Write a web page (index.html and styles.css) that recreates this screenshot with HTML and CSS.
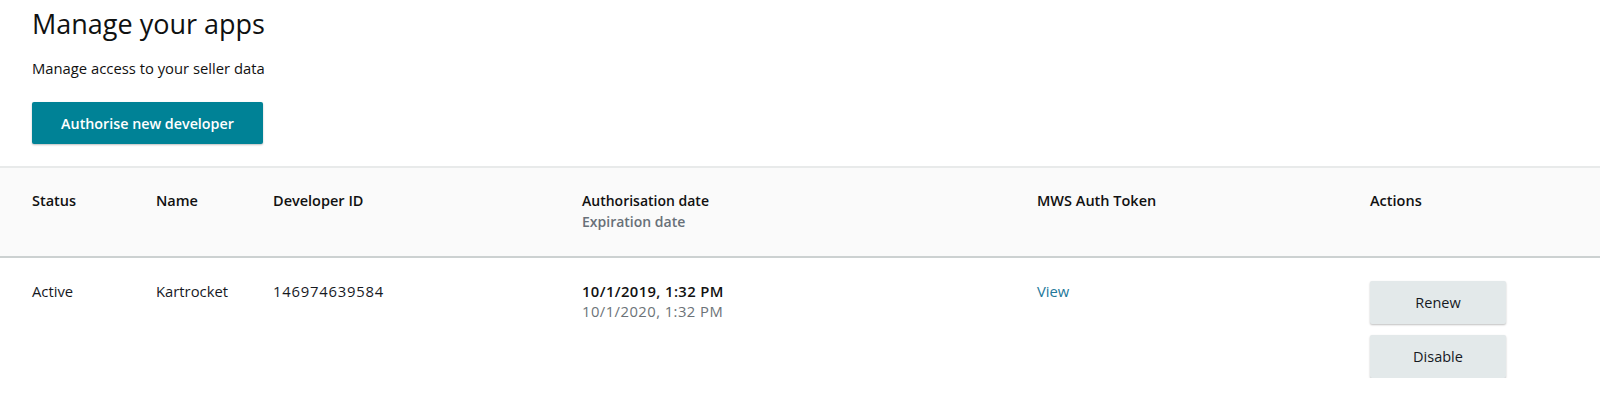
FILE: index.html
```html
<!DOCTYPE html>
<html lang="en">
<head>
<meta charset="utf-8">
<title>Manage your apps</title>
<link rel="stylesheet" href="styles.css">
</head>
<body>
<div class="page">
  <header class="intro">
    <h1 class="title">Manage your apps</h1>
    <p class="subtitle">Manage access to your seller data</p>
    <button class="btn-primary" type="button">Authorise new developer</button>
  </header>

  <div class="table">
    <div class="row head">
      <div class="cell">Status</div>
      <div class="cell">Name</div>
      <div class="cell">Developer ID</div>
      <div class="cell"><div class="head-main">Authorisation date</div><div class="muted">Expiration date</div></div>
      <div class="cell">MWS Auth Token</div>
      <div class="cell">Actions</div>
    </div>
    <div class="row body">
      <div class="cell">Active</div>
      <div class="cell">Kartrocket</div>
      <div class="cell num">146974639584</div>
      <div class="cell"><div class="strong">10/1/2019, 1:32 PM</div><div class="muted-light">10/1/2020, 1:32 PM</div></div>
      <div class="cell"><a class="link" href="#">View</a></div>
      <div class="cell actions">
        <button class="btn-secondary" type="button">Renew</button>
        <button class="btn-secondary" type="button">Disable</button>
      </div>
    </div>
  </div>
</div>
</body>
</html>
```

FILE: styles.css
```css
html, body {
  margin: 0;
  padding: 0;
  background: #ffffff;
}
body {
  font-family: "Open Sans", "Noto Sans", Arial, sans-serif;
  color: #111111;
  font-size: 14px;
}
.intro {
  padding: 6px 32px 0 32px;
  height: 166px;
  box-sizing: border-box;
}
.title {
  margin: 0;
  font-size: 27px;
  line-height: 36px;
  font-weight: 400;
  color: #0f1111;
}
.subtitle {
  margin: 16px 0 0 0;
  font-size: 14.8px;
  line-height: 20px;
  color: #111111;
}
.btn-primary {
  margin-top: 24px;
  width: 231px;
  height: 42px;
  border: 0;
  border-radius: 2px;
  background: #008296;
  color: #ffffff;
  font-family: inherit;
  font-size: 14.3px;
  font-weight: 600;
  box-shadow: 0 1px 2px rgba(0, 0, 0, 0.25);
  cursor: pointer;
}
.table {
  width: 100%;
}
.row {
  display: grid;
  grid-template-columns: 124px 117px 309px 455px 333px 1fr;
  padding-left: 32px;
  box-sizing: border-box;
}
.head {
  background: #fafafa;
  border-top: 2px solid #e8eaea;
  border-bottom: 2px solid #ccd1d1;
  height: 92px;
  padding-top: 22px;
  font-weight: 600;
  font-size: 14.5px;
  line-height: 21px;
  color: #111111;
}
.head-main {
  font-size: 14px;
}
.body {
  padding-top: 23px;
  font-size: 14.8px;
  line-height: 20px;
  color: #16191f;
}
.num {
  letter-spacing: 0.8px;
}
.muted {
  color: #687078;
  font-size: 14px;
}
.strong {
  font-weight: 600;
  color: #111111;
  letter-spacing: 0.4px;
}
.muted-light {
  color: #6c7378;
  letter-spacing: 0.45px;
}
.link {
  color: #23789a;
  text-decoration: none;
}
.actions {
  display: flex;
  flex-direction: column;
  gap: 11px;
}
.btn-secondary {
  width: 136px;
  height: 43px;
  border: 0;
  border-radius: 2px;
  background: #e3e9ea;
  color: #16191f;
  font-family: inherit;
  font-size: 14.5px;
  box-shadow: 0 1px 2px rgba(0, 0, 0, 0.25);
  cursor: pointer;
}
```
